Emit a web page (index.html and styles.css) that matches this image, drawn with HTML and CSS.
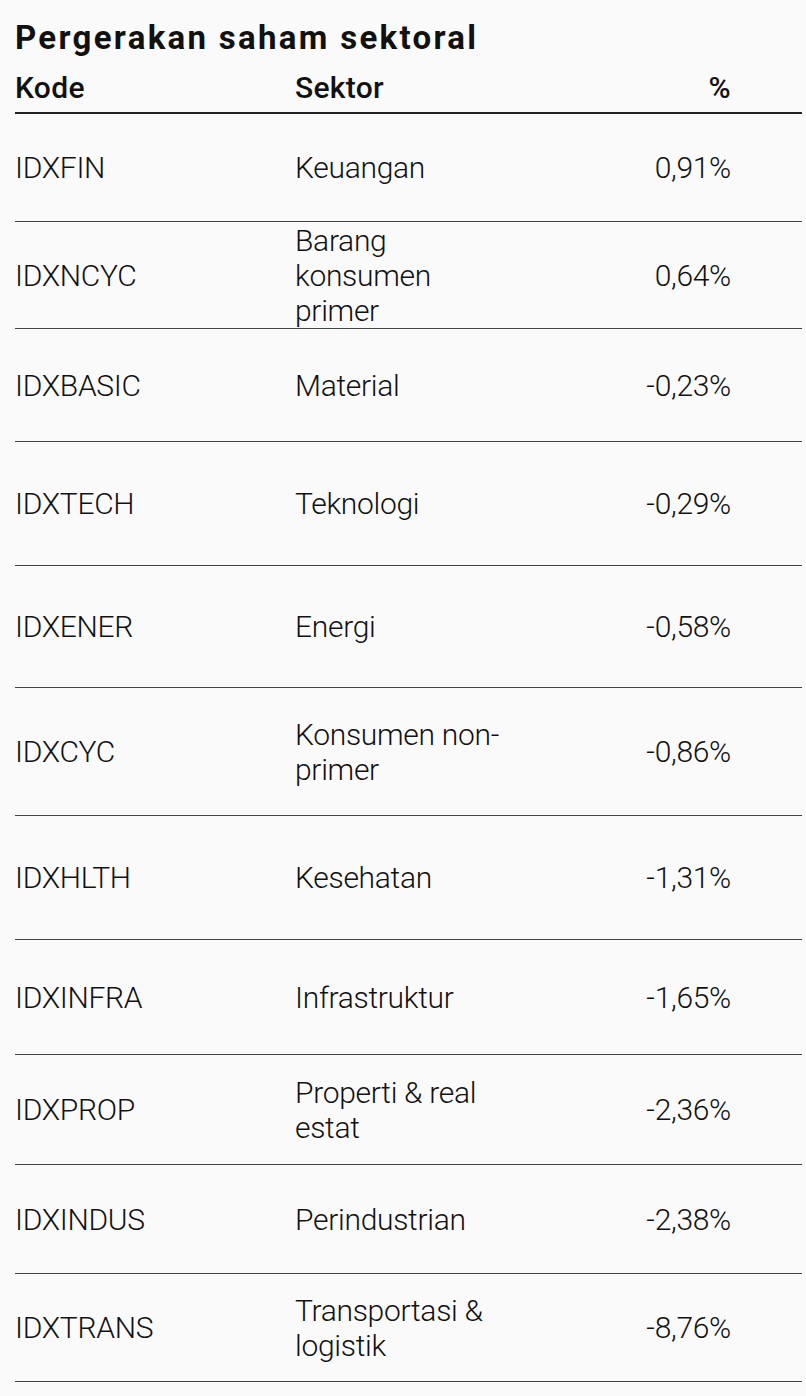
FILE: index.html
```html
<!DOCTYPE html>
<html lang="id">
<head>
<meta charset="utf-8">
<title>Pergerakan saham sektoral</title>
<link rel="stylesheet" href="styles.css">
</head>
<body>
<main class="page">
  <h1 class="title">Pergerakan saham sektoral</h1>
  <div class="table">
    <div class="row head">
      <div class="cell code">Kode</div>
      <div class="cell sector">Sektor</div>
      <div class="cell pct">%</div>
    </div>
    <div class="row">
      <div class="cell code">IDXFIN</div>
      <div class="cell sector">Keuangan</div>
      <div class="cell pct">0,91%</div>
    </div>
    <div class="row">
      <div class="cell code">IDXNCYC</div>
      <div class="cell sector">Barang konsumen primer</div>
      <div class="cell pct">0,64%</div>
    </div>
    <div class="row">
      <div class="cell code">IDXBASIC</div>
      <div class="cell sector">Material</div>
      <div class="cell pct">-0,23%</div>
    </div>
    <div class="row">
      <div class="cell code">IDXTECH</div>
      <div class="cell sector">Teknologi</div>
      <div class="cell pct">-0,29%</div>
    </div>
    <div class="row">
      <div class="cell code">IDXENER</div>
      <div class="cell sector">Energi</div>
      <div class="cell pct">-0,58%</div>
    </div>
    <div class="row">
      <div class="cell code">IDXCYC</div>
      <div class="cell sector">Konsumen non-primer</div>
      <div class="cell pct">-0,86%</div>
    </div>
    <div class="row">
      <div class="cell code">IDXHLTH</div>
      <div class="cell sector">Kesehatan</div>
      <div class="cell pct">-1,31%</div>
    </div>
    <div class="row">
      <div class="cell code">IDXINFRA</div>
      <div class="cell sector">Infrastruktur</div>
      <div class="cell pct">-1,65%</div>
    </div>
    <div class="row">
      <div class="cell code">IDXPROP</div>
      <div class="cell sector">Properti &amp; real estat</div>
      <div class="cell pct">-2,36%</div>
    </div>
    <div class="row">
      <div class="cell code">IDXINDUS</div>
      <div class="cell sector">Perindustrian</div>
      <div class="cell pct">-2,38%</div>
    </div>
    <div class="row">
      <div class="cell code">IDXTRANS</div>
      <div class="cell sector">Transportasi &amp; logistik</div>
      <div class="cell pct">-8,76%</div>
    </div>
  </div>
</main>
</body>
</html>
```

FILE: styles.css
```css
* {
  box-sizing: border-box;
}

body {
  margin: 0;
  background: #fafafa;
  color: #111;
  font-family: Roboto, "Liberation Sans", Arial, sans-serif;
}

.page {
  padding: 19px 4px 0 15px;
}

.title {
  margin: 0;
  font-size: 33px;
  line-height: 37px;
  font-weight: 700;
  letter-spacing: 2.3px;
}

.table {
  display: flex;
  flex-direction: column;
}

.row {
  display: grid;
  grid-template-columns: 280px 220px 1fr;
  align-items: center;
  border-bottom: 1px solid #444;
  font-size: 30px;
  line-height: 35px;
  font-weight: 300;
  letter-spacing: -0.3px;
}

.row.head {
  padding: 14px 0 7px;
  border-bottom: 2px solid #222;
  font-weight: 500;
  letter-spacing: 0.3px;
  align-items: end;
}

.row:nth-child(2) { height: 108px; }
.row:nth-child(3) { height: 107px; }
.row:nth-child(4) { height: 113px; }
.row:nth-child(5) { height: 124px; }
.row:nth-child(6) { height: 122px; }
.row:nth-child(7) { height: 128px; }
.row:nth-child(8) { height: 124px; }
.row:nth-child(9) { height: 115px; }
.row:nth-child(10) { height: 110px; }
.row:nth-child(11) { height: 109px; }
.row:nth-child(12) { height: 108px; }

.cell.pct {
  text-align: right;
  padding-right: 71px;
}
```
